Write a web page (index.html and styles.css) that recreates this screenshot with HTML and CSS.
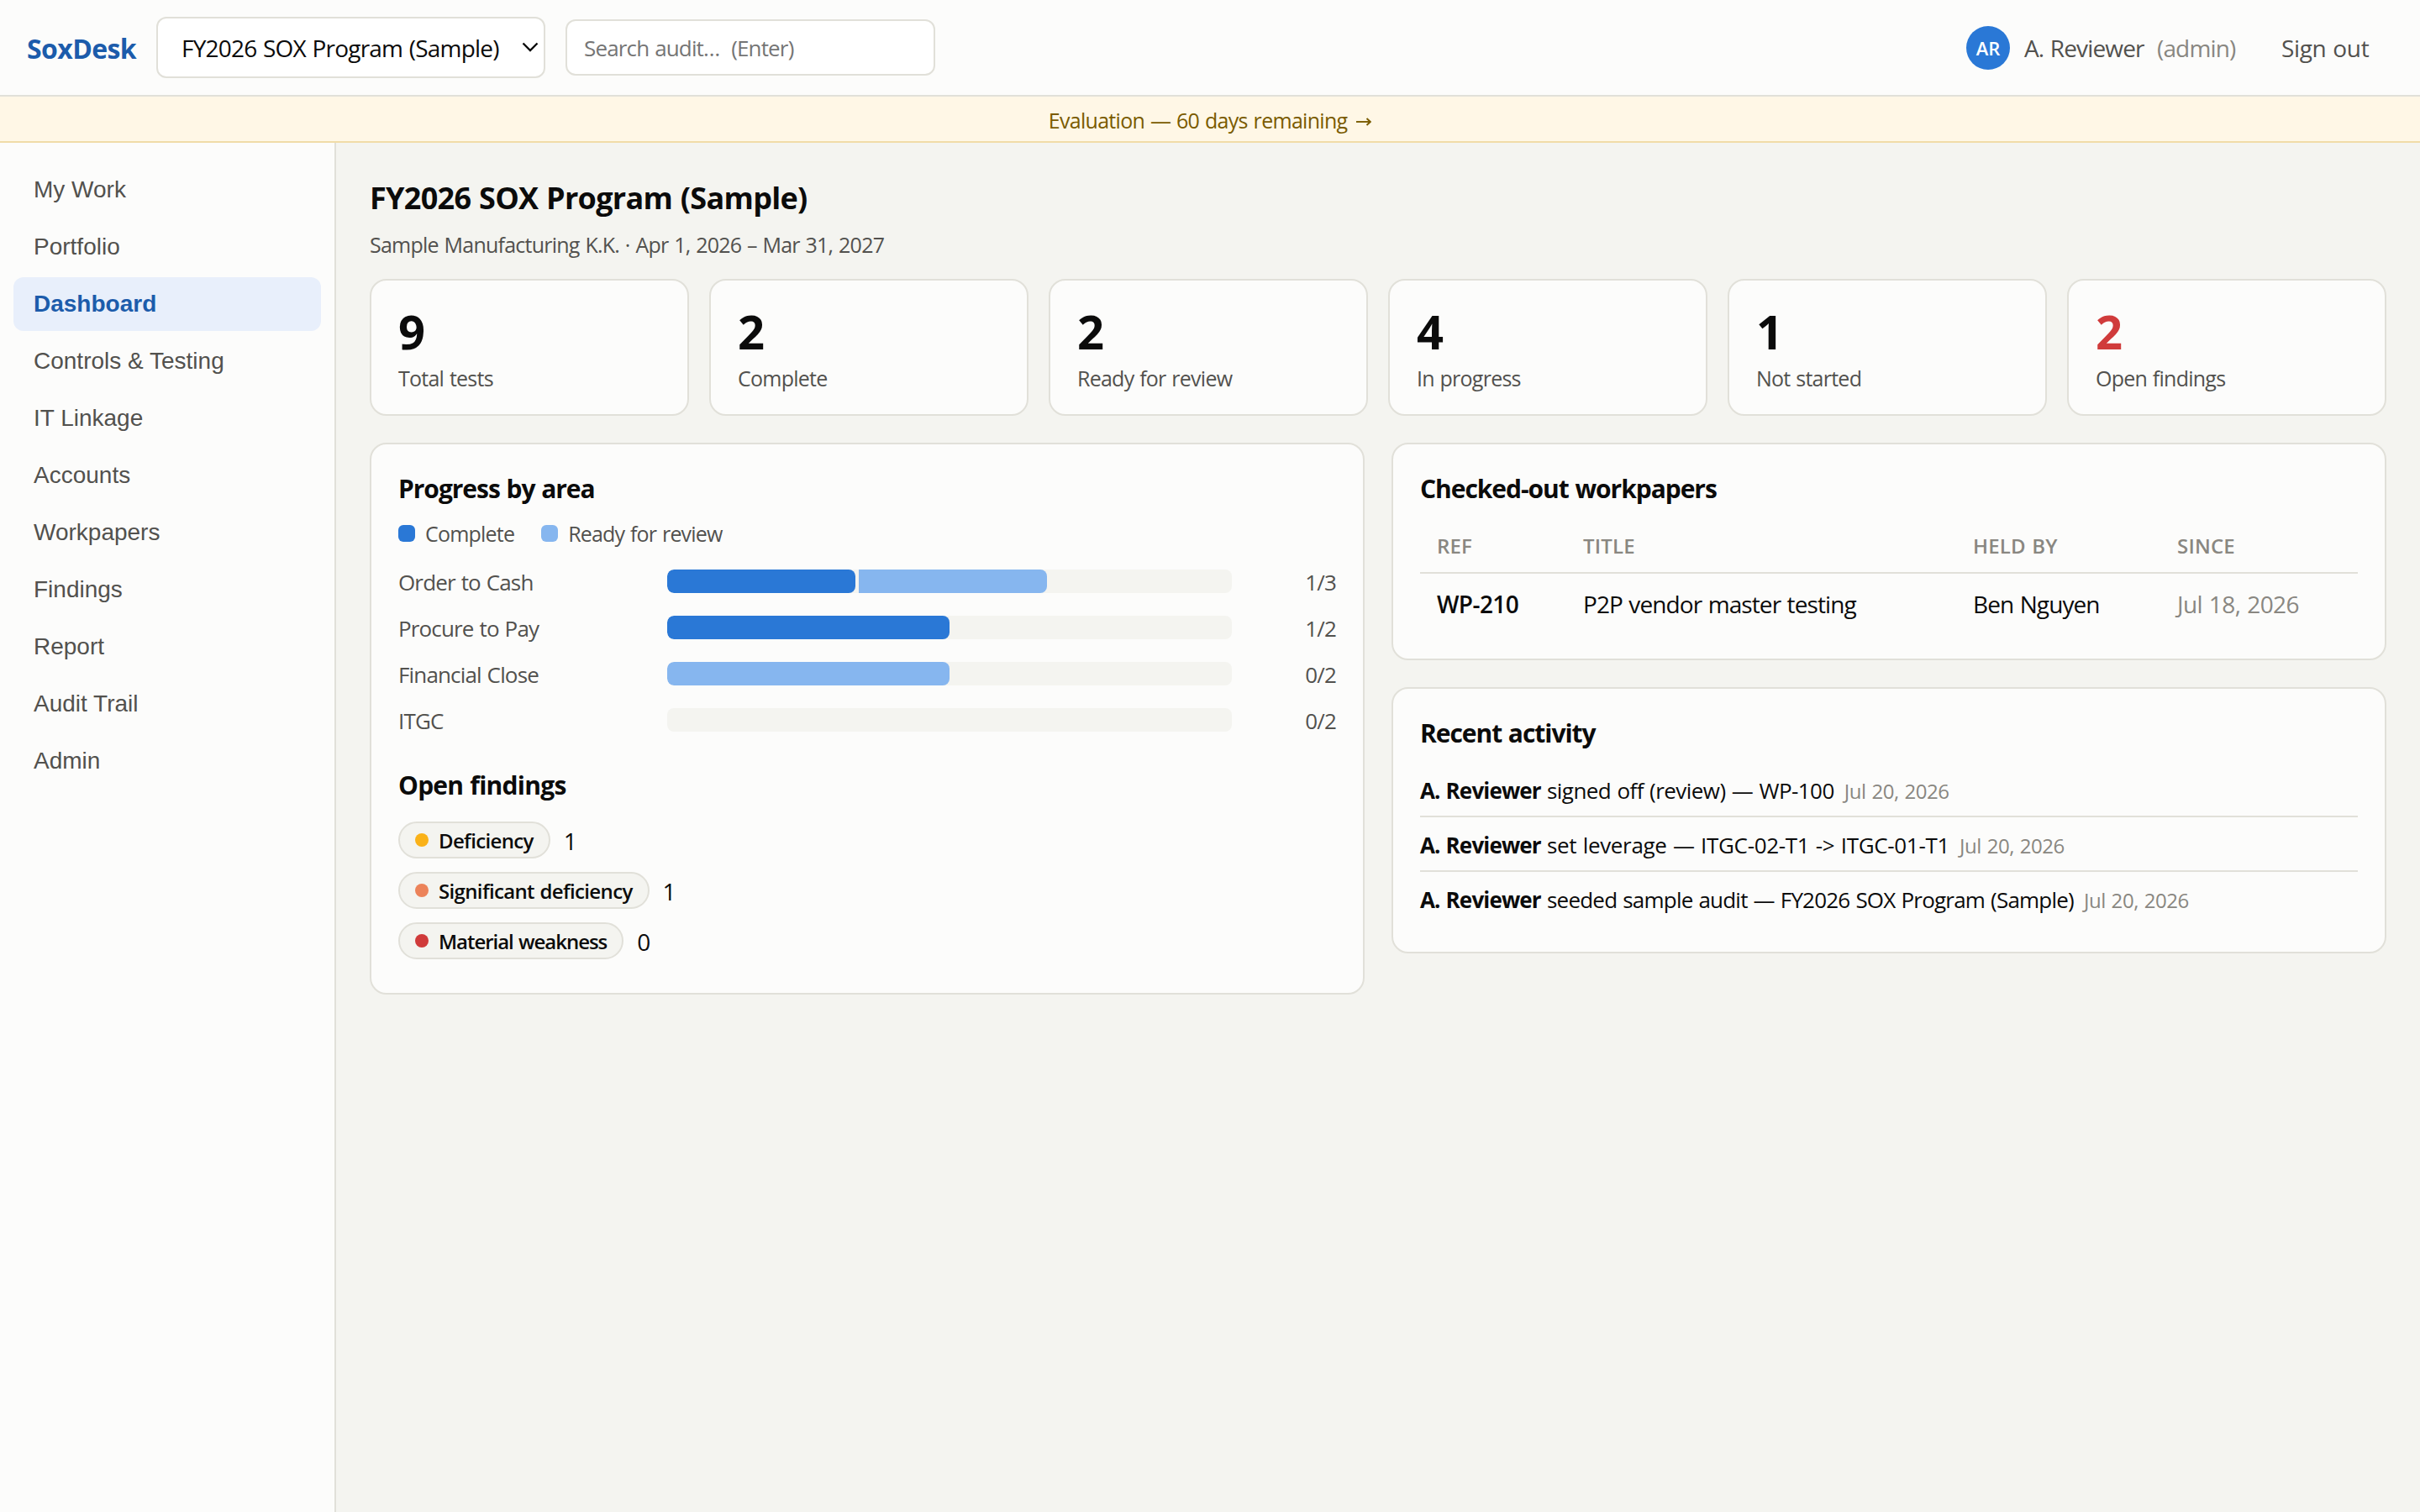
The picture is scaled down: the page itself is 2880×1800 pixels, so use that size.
FILE: index.html
```html
<!DOCTYPE html>
<html lang="en">
<head>
<meta charset="utf-8">
<title>SoxDesk</title>
<link rel="stylesheet" href="styles.css">
</head>
<body>
<header class="topbar">
  <div class="brand">SoxDesk</div>
  <div class="picker">
    <span>FY2026 SOX Program (Sample)</span>
    <svg class="chevron" viewBox="0 0 20 12" width="20" height="12" fill="none" stroke="#0b0b0b" stroke-width="2.4"><path d="M1.500 1.500 10 10l8.500-8.500"/></svg>
  </div>
  <div class="search">Search audit…&nbsp; (Enter)</div>
  <div class="user">
    <span class="avatar">AR</span>
    <span class="user-name">A. Reviewer</span>
    <span class="role">(admin)</span>
    <span class="signout">Sign out</span>
  </div>
</header>
<div class="banner">Evaluation — 60 days remaining <svg class="arrow" viewBox="0 0 18 10" width="18" height="10" fill="none" stroke="currentColor" stroke-width="1.900"><path d="M0 5H16.500"/><path d="M12.500 1 16.800 5l-4.300 4"/></svg></div>
<div class="shell">
  <nav class="sidebar">
    <a>My Work</a>
    <a>Portfolio</a>
    <a class="active">Dashboard</a>
    <a>Controls &amp; Testing</a>
    <a>IT Linkage</a>
    <a>Accounts</a>
    <a>Workpapers</a>
    <a>Findings</a>
    <a>Report</a>
    <a>Audit Trail</a>
    <a>Admin</a>
  </nav>
  <main class="main">
    <h1>FY2026 SOX Program (Sample)</h1>
    <p class="sub">Sample Manufacturing K.K. · Apr 1, 2026 – Mar 31, 2027</p>
    <section class="tiles">
      <div class="tile"><b>9</b><span>Total tests</span></div>
      <div class="tile"><b>2</b><span>Complete</span></div>
      <div class="tile"><b>2</b><span>Ready for review</span></div>
      <div class="tile"><b>4</b><span>In progress</span></div>
      <div class="tile"><b>1</b><span>Not started</span></div>
      <div class="tile alert"><b>2</b><span>Open findings</span></div>
    </section>
    <div class="columns">
      <section class="card">
        <h2>Progress by area</h2>
        <div class="legend">
          <span class="key"><i class="swatch done"></i>Complete</span>
          <span class="key"><i class="swatch ready"></i>Ready for review</span>
        </div>
        <div class="areas">
          <div class="area"><span>Order to Cash</span><div class="track"><i class="seg done" style="width:33.333%"></i><i class="seg ready" style="width:33.333%"></i></div><span class="ratio">1/3</span></div>
          <div class="area"><span>Procure to Pay</span><div class="track"><i class="seg done" style="width:50%"></i></div><span class="ratio">1/2</span></div>
          <div class="area"><span>Financial Close</span><div class="track"><i class="seg ready" style="width:50%"></i></div><span class="ratio">0/2</span></div>
          <div class="area"><span>ITGC</span><div class="track"></div><span class="ratio">0/2</span></div>
        </div>
        <h2 class="findings-title">Open findings</h2>
        <div class="findings">
          <div class="finding"><span class="pill"><i class="dot low"></i>Deficiency</span><span>1</span></div>
          <div class="finding"><span class="pill"><i class="dot mid"></i>Significant deficiency</span><span>1</span></div>
          <div class="finding"><span class="pill tight"><i class="dot high"></i>Material weakness</span><span>0</span></div>
        </div>
      </section>
      <div class="stack">
        <section class="card">
          <h2>Checked-out workpapers</h2>
          <div class="table">
            <div class="row head"><span>REF</span><span>TITLE</span><span>HELD BY</span><span>SINCE</span></div>
            <div class="row"><span class="ref">WP-210</span><span>P2P vendor master testing</span><span>Ben Nguyen</span><span class="since">Jul 18, 2026</span></div>
          </div>
        </section>
        <section class="card">
          <h2>Recent activity</h2>
          <ul class="activity">
            <li><b>A. Reviewer</b><span class="event codes">signed off (review) — WP-100</span><time>Jul 20, 2026</time></li>
            <li><b>A. Reviewer</b><span class="event refs">set leverage — ITGC-02-T1 -&gt; ITGC-01-T1</span><time>Jul 20, 2026</time></li>
            <li><b>A. Reviewer</b><span class="event">seeded sample audit — FY2026 SOX Program (Sample)</span><time>Jul 20, 2026</time></li>
          </ul>
        </section>
      </div>
    </div>
  </main>
</div>
</body>
</html>
```
FILE: styles.css
```css
:root {
  --page: #f4f4f0;
  --surface: #fcfcfb;
  --line: #e1e0d9;
  --ink: #0b0b0b;
  --ink-2: #52514e;
  --muted: #898781;
  --blue: #2a78d6;
  --blue-light: #86b6ef;
  --accent: #1c5cab;
}
* { box-sizing: border-box; }
body {
  margin: 0;
  height: 1800px;
  display: flex;
  flex-direction: column;
  background: var(--page);
  color: var(--ink);
  font: 28px/40px "Open Sans", "Noto Sans", sans-serif;
  letter-spacing: -0.85px;
  word-spacing: 1px;
  white-space: nowrap;
}
h1, h2, p, ul { margin: 0; padding: 0; }

.topbar {
  height: 115px;
  flex: none;
  display: flex;
  align-items: center;
  padding: 0 32px;
  background: var(--surface);
  border-bottom: 2px solid var(--line);
}
.brand {
  width: 154px;
  padding-top: 3px;
  color: var(--accent);
  font-size: 32px;
  font-weight: 700;
  letter-spacing: -0.6px;
}
.picker, .search {
  display: flex;
  align-items: center;
  background: #fff;
  border: 2px solid var(--line);
  border-radius: 12px;
}
.picker {
  width: 463px;
  height: 73px;
  padding: 1px 6px 0 28px;
  justify-content: space-between;
  letter-spacing: -0.78px;
}
.chevron { margin-bottom: 3px; }
.search {
  width: 440px;
  height: 67px;
  margin-left: 24px;
  padding-left: 20px;
  padding-top: 1px;
  color: #757575;
  font-size: 26px;
  letter-spacing: -0.85px;
}
.user {
  margin-left: auto;
  display: flex;
  align-items: center;
  color: var(--ink-2);
}
.avatar {
  width: 52px;
  height: 52px;
  margin-right: 17px;
  border-radius: 50%;
  background: var(--blue);
  color: #fff;
  font-size: 22px;
  font-weight: 600;
  line-height: 52px;
  letter-spacing: 0;
  text-align: center;
}
.user-name, .role, .signout { padding-top: 1px; }
.user-name { width: 158px; }
.role { width: 148px; color: var(--muted); }
.signout { width: 133px; letter-spacing: -0.35px; }

.banner {
  height: 55px;
  flex: none;
  padding-top: 9px;
  background: #fff7e6;
  border-bottom: 2px solid #f0dca8;
  color: #7a5b00;
  font-size: 25px;
  line-height: 38px;
  letter-spacing: -0.7px;
  text-align: center;
}
.arrow { margin: 0 0 3px 4px; vertical-align: baseline; }

.shell { flex: 1; display: flex; }
.sidebar {
  width: 400px;
  padding: 24px 16px;
  display: flex;
  flex-direction: column;
  gap: 4px;
  background: var(--surface);
  border-right: 2px solid var(--line);
  color: var(--ink-2);
  font-family: "Liberation Sans", Arial, sans-serif;
  letter-spacing: 0;
  word-spacing: 0;
}
.sidebar a {
  height: 64px;
  padding: 0 24px;
  border-radius: 12px;
  line-height: 63px;
}
.sidebar .active {
  background: #e8effb;
  color: var(--accent);
  font-weight: 700;
}

.main { flex: 1; padding: 42px 40px 0; }
h1 {
  font-size: 36px;
  line-height: 48px;
  letter-spacing: -0.7px;
}
.sub {
  margin-top: 12px;
  color: var(--ink-2);
  font-size: 25px;
  line-height: 38px;
  letter-spacing: -0.76px;
}
.tiles {
  margin-top: 22px;
  display: grid;
  grid-template-columns: repeat(6, 1fr);
  gap: 24px;
}
.tile {
  height: 163px;
  padding: 29px 32px 0;
  display: flex;
  flex-direction: column;
  background: var(--surface);
  border: 2px solid var(--line);
  border-radius: 20px;
}
.tile b {
  font-size: 56px;
  line-height: 62px;
  letter-spacing: 0;
}
.tile span {
  margin-top: 6px;
  color: var(--ink-2);
  font-size: 25px;
  line-height: 38px;
  letter-spacing: -0.75px;
}
.alert b { color: #d03b3b; }

.columns {
  margin-top: 32px;
  display: grid;
  grid-template-columns: 1fr 1fr;
  align-items: start;
  gap: 32px;
}
.stack { display: grid; gap: 32px; }
.card {
  padding: 32px 32px 31px;
  background: var(--surface);
  border: 2px solid var(--line);
  border-radius: 20px;
}
h2 {
  font-size: 30px;
  line-height: 42px;
  letter-spacing: -1.05px;
}
.legend {
  margin-top: 13px;
  display: flex;
  gap: 32px;
  color: var(--ink-2);
  font-size: 25px;
  line-height: 38px;
  letter-spacing: -0.8px;
}
.key { display: flex; align-items: center; gap: 12px; }
.swatch { width: 20px; height: 20px; border-radius: 6px; }
.done { background: var(--blue); }
.ready { background: var(--blue-light); }
.areas {
  margin-top: 19px;
  display: grid;
  gap: 19px;
}
.area {
  height: 36px;
  display: grid;
  grid-template-columns: 296px 672px 100px;
  column-gap: 24px;
  align-items: center;
  color: var(--ink-2);
  font-size: 26px;
  line-height: 36px;
}
.area span { padding-top: 2px; }
.track {
  height: 28px;
  display: flex;
  gap: 4px;
  overflow: hidden;
  background: #f4f4f0;
  border-radius: 8px;
}
.seg { border-radius: 8px; }
.seg + .seg { border-radius: 0 8px 8px 0; }
.ratio { text-align: right; }
.findings-title { margin-top: 40px; letter-spacing: -0.75px; }
.findings {
  margin: 22px 0 9px;
  display: grid;
  gap: 16px;
}
.finding { height: 44px; display: flex; align-items: center; gap: 16px; }
.finding > span:last-child { padding-top: 1px; }
.pill {
  height: 44px;
  padding: 1px 18px 0;
  display: flex;
  align-items: center;
  gap: 12px;
  background: #f4f4f0;
  border: 2px solid var(--line);
  border-radius: 22px;
  font-size: 24px;
  font-weight: 600;
  letter-spacing: -0.65px;
}
.tight { letter-spacing: -1.03px; }
.dot { width: 16px; height: 16px; margin-bottom: 1px; border-radius: 50%; }
.low { background: #fab219; }
.mid { background: #ec835a; }
.high { background: #d03b3b; }

.table { margin-top: 13px; }
.row {
  height: 70px;
  padding: 1px 20px 0;
  display: grid;
  grid-template-columns: 174px 464px 243px 1fr;
  align-items: center;
  letter-spacing: -0.9px;
}
.head {
  height: 67px;
  padding-top: 2px;
  border-bottom: 2px solid var(--line);
  color: var(--muted);
  font-size: 24px;
  font-weight: 600;
  letter-spacing: 0.2px;
}
.ref { font-weight: 600; letter-spacing: -0.6px; }
.since { color: var(--muted); letter-spacing: -0.55px; }

.activity { margin-top: 14px; list-style: none; }
.activity li {
  height: 65px;
  display: flex;
  align-items: baseline;
  padding-top: 14px;
  border-bottom: 2px solid var(--line);
  font-size: 26px;
  line-height: 38px;
}
.activity li:last-child { height: 64px; border: 0; }
.activity b { width: 151px; letter-spacing: -0.85px; }
.event { margin-right: 12px; letter-spacing: -0.79px; }
.codes { letter-spacing: -0.55px; }
.refs { letter-spacing: -0.33px; }
.activity time { color: var(--muted); font-size: 24px; letter-spacing: -0.45px; }
```
